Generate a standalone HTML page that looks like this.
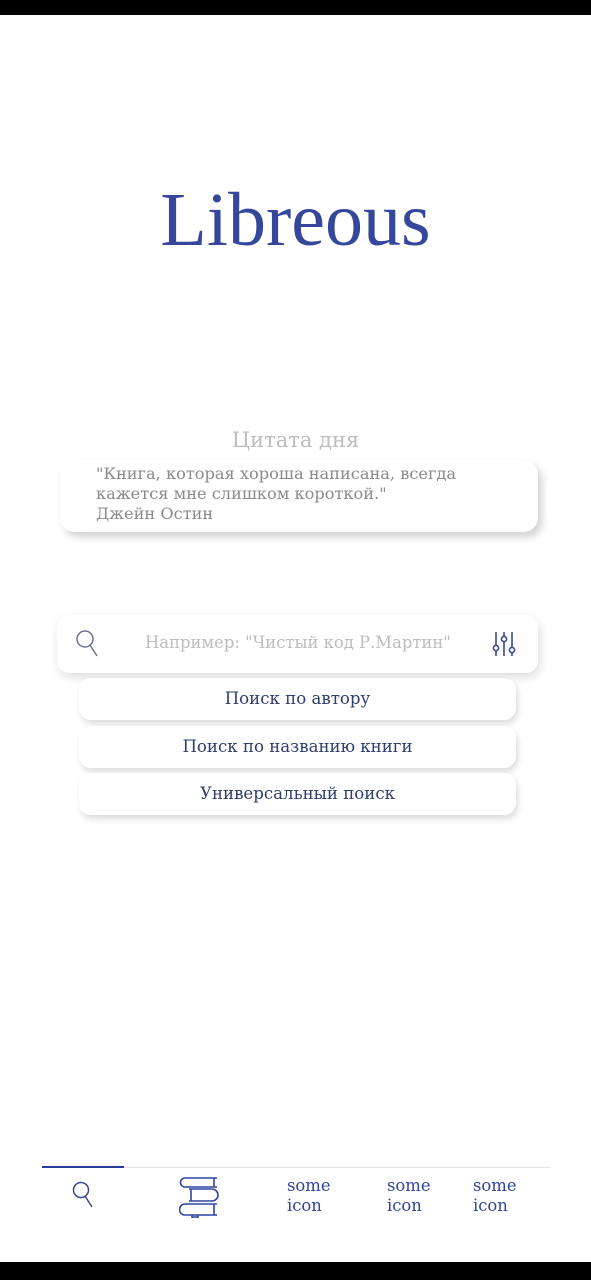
<!DOCTYPE html>
<html><head><meta charset="utf-8"><style>
*{margin:0;padding:0;box-sizing:border-box}
body{width:591px;height:1280px;background:#fff;position:relative;overflow:hidden;font-family:"DejaVu Serif","Liberation Serif",serif}
.bar{position:absolute;left:0;width:591px;background:#000}
.abs{position:absolute}
.card{position:absolute;background:#fff;border-radius:14px;box-shadow:4px 5px 8px rgba(0,0,0,.18)}
.btn{position:absolute;left:79px;width:437px;height:42px;background:#fff;border-radius:12px;box-shadow:2px 4px 7px rgba(0,0,0,.14);text-align:center;line-height:42px;color:#2e3d6e;font-size:16.6px}
.nt{position:absolute;color:#2f45a0;font-size:16.4px;line-height:19.5px}
</style></head><body>
<div class="bar" style="top:0;height:15px"></div>
<div class="bar" style="top:1262px;height:18px"></div>
<div class="abs" style="left:0;width:591px;top:175px;text-align:center;font-family:'Liberation Serif',serif;font-size:76px;color:#34479a;line-height:90px">Libreous</div>
<div class="abs" style="left:0;width:591px;top:426px;text-align:center;font-size:21px;color:#bdbdbd;line-height:28px">Цитата дня</div>
<div class="card" style="left:60px;top:460px;width:478px;height:72px"></div>
<div class="abs" style="left:96px;top:464px;font-size:16.2px;color:#8a8a8a;line-height:20px">"Книга, которая хороша написана, всегда<br>кажется мне слишком короткой."<br>Джейн Остин</div>
<div class="card" style="left:57px;top:615px;width:481px;height:58px;border-radius:12px;box-shadow:2px 4px 10px rgba(0,0,0,.14)"></div>
<svg class="abs" style="left:74px;top:628px" width="26" height="32" viewBox="0 0 26 32"><circle cx="11" cy="11" r="8" fill="none" stroke="#6b7390" stroke-width="1.5"/><path d="M16 17 L23 28" stroke="#6b7390" stroke-width="1.5"/></svg>
<div class="abs" style="left:145px;top:633px;font-size:16.4px;color:#bdbdbd;line-height:20px">Например: "Чистый код Р.Мартин"</div>
<svg class="abs" style="left:492px;top:631px" width="24" height="26" viewBox="0 0 24 26" fill="none" stroke="#3a4a8a" stroke-width="1.6"><path d="M4 1V25M12 1V25M20 1V25"/><circle cx="4" cy="17" r="2.6" fill="#fff"/><circle cx="12" cy="8" r="2.6" fill="#fff"/><circle cx="20" cy="19" r="2.6" fill="#fff"/></svg>
<div class="btn" style="top:678px">Поиск по автору</div>
<div class="btn" style="top:726px">Поиск по названию книги</div>
<div class="btn" style="top:773px">Универсальный поиск</div>
<div class="abs" style="left:42px;top:1167px;width:508px;height:1px;background:#e6e6e6"></div>
<div class="abs" style="left:42px;top:1166px;width:82px;height:2px;background:#2a3a9a"></div>
<svg class="abs" style="left:70px;top:1180px" width="26" height="30" viewBox="0 0 26 30"><circle cx="11" cy="10" r="7.5" fill="none" stroke="#3a4a8a" stroke-width="1.5"/><path d="M15 16 L22 27" stroke="#3a4a8a" stroke-width="1.5"/></svg>
<svg class="abs" style="left:179px;top:1176px" width="40" height="42" viewBox="0 0 40 42" fill="none" stroke="#2f45a0" stroke-width="1.6"><path d="M38 2H6a4.5 4.5 0 0 0 0 9H38M35 2V11"/><path d="M10 13H33a6 6 0 0 1 0 12H10M12 13V25"/><path d="M38 28H6a5 5 0 0 0 0 11H38M35 28V39"/><path d="M13 39V42M19 39V42M13 41H19"/></svg>
<div class="nt" style="left:287px;top:1176px">some<br>icon</div>
<div class="nt" style="left:387px;top:1176px">some<br>icon</div>
<div class="nt" style="left:473px;top:1176px">some<br>icon</div>
</body></html>
